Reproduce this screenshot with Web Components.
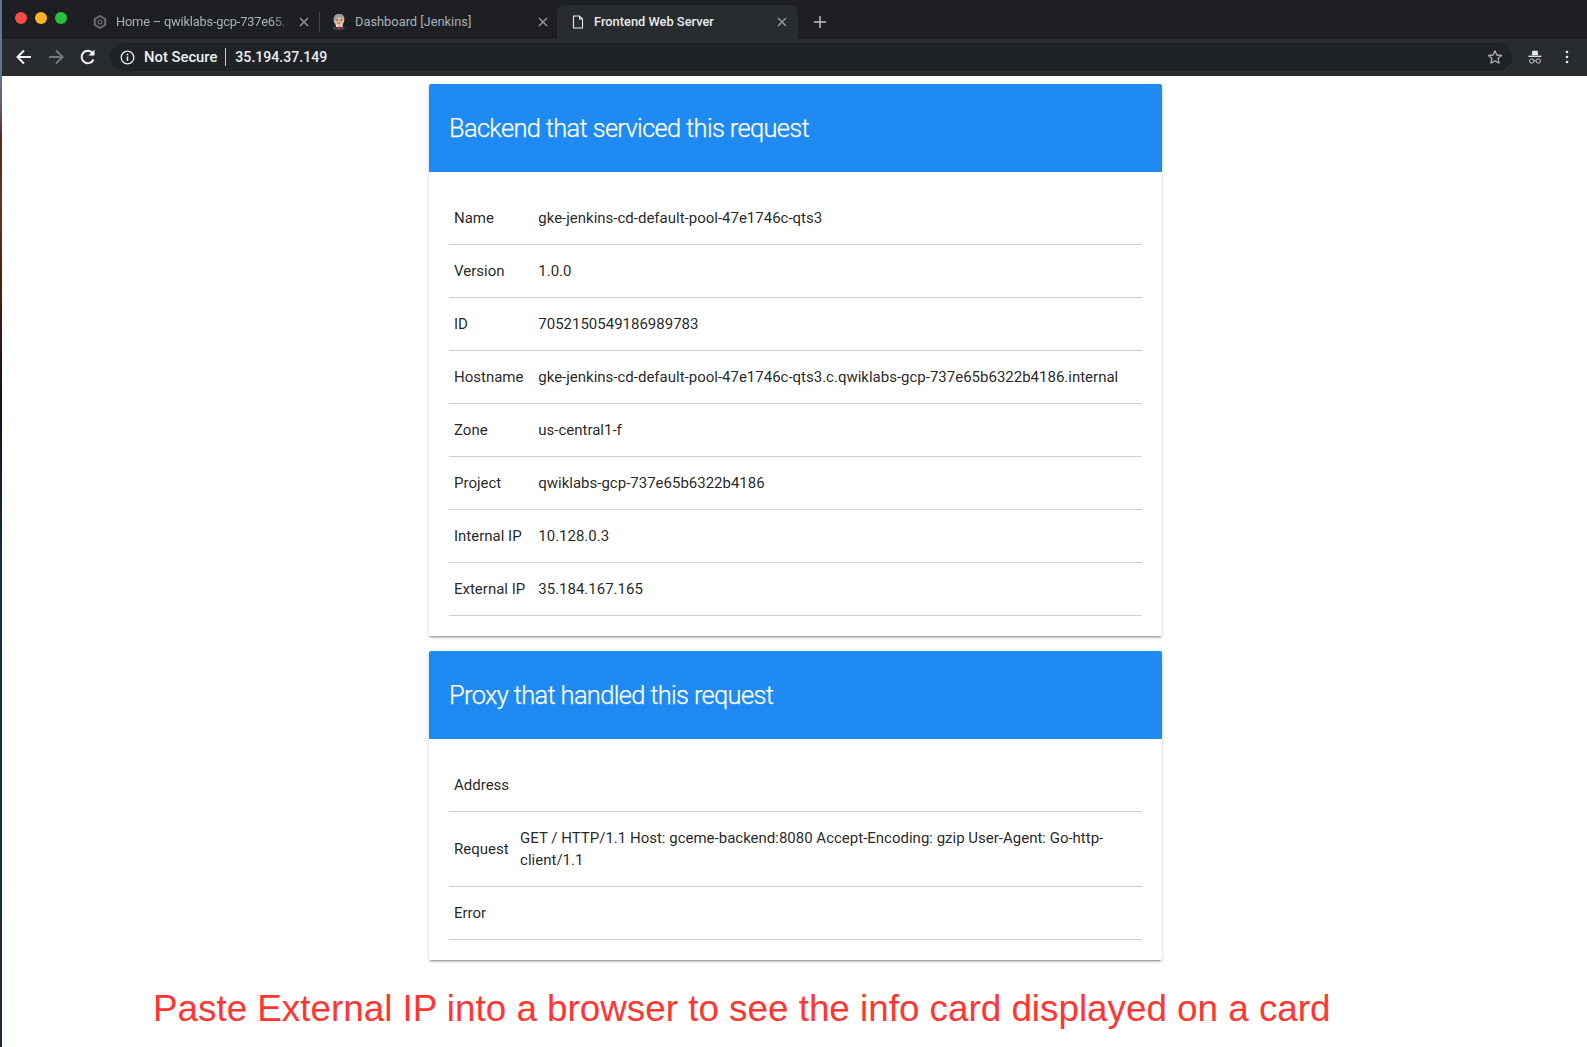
<!DOCTYPE html>
<html><head><meta charset="utf-8"><title>Frontend Web Server</title>
<style>
html,body{margin:0;background:#fff;height:100%}
body{width:1587px;height:1047px;overflow:hidden;display:flex;flex-direction:column;font-family:Roboto,sans-serif}
</style></head><body>
<browser-chrome></browser-chrome>
<page-area>
<info-card title="Backend that serviced this request">
<info-row label="Name">gke-jenkins-cd-default-pool-47e1746c-qts3</info-row>
<info-row label="Version">1.0.0</info-row>
<info-row label="ID">7052150549186989783</info-row>
<info-row label="Hostname">gke-jenkins-cd-default-pool-47e1746c-qts3.c.qwiklabs-gcp-737e65b6322b4186.internal</info-row>
<info-row label="Zone">us-central1-f</info-row>
<info-row label="Project">qwiklabs-gcp-737e65b6322b4186</info-row>
<info-row label="Internal IP">10.128.0.3</info-row>
<info-row label="External IP">35.184.167.165</info-row>
</info-card>
<info-card title="Proxy that handled this request" style="--label-pad:5px">
<info-row label="Address"></info-row>
<info-row label="Request">GET / HTTP/1.1 Host: gceme-backend:8080 Accept-Encoding: gzip User-Agent: Go-http-client/1.1</info-row>
<info-row label="Error"></info-row>
</info-card>
<red-caption>Paste External IP into a browser to see the info card displayed on a card</red-caption>
</page-area>
<script>
const def=(name,html,init)=>customElements.define(name,class extends HTMLElement{
  constructor(){super();this.attachShadow({mode:'open'}).innerHTML=html;}
  connectedCallback(){init&&init(this)}
});
const X='<svg class="x" width="10" height="10" viewBox="0 0 10 10"><path d="M1 1l8 8M9 1l-8 8" stroke="#9a9da1" stroke-width="1.3" fill="none"/></svg>';
def('browser-chrome',`<style>
:host{display:block;flex:none;font-family:Roboto,sans-serif;position:relative}
:host::after{content:"";position:absolute;left:0;top:0;bottom:0;width:2px;background:#64748c}
.strip{height:39px;background:#1d1f23;display:flex;align-items:flex-end;box-sizing:border-box}
.lights{display:flex;gap:8px;padding:12px 0 15px 15px;width:76px;align-self:flex-start}
.lights i{width:12px;height:12px;border-radius:50%;display:block}
.tab{height:34px;display:flex;align-items:center;font-size:12.85px;color:#a9b2bb;box-sizing:border-box;position:relative;white-space:nowrap}
.tab .t{flex:1;min-width:0;padding-bottom:2px}
.t1{width:228px;padding:0 10px 0 0}
.t1 svg.fav{margin:0 9px 0 2px}
.t1 .t{letter-spacing:-.2px;-webkit-mask-image:linear-gradient(90deg,#000 86%,rgba(0,0,0,.3) 93%);mask-image:linear-gradient(90deg,#000 86%,rgba(0,0,0,.3) 93%)}
.t2{width:238px;padding:0 9px 0 13px}
.t2::before{content:"";position:absolute;left:0;top:7px;height:20px;width:1px;background:#46494d}
.t2 svg.fav{margin:0 9px 0 0}
.t3{width:241px;padding:0 11px 0 15px;background:#292c2f;color:#e8eaed;border-radius:8px 8px 0 0;font-weight:500}
.t3 svg.fav{margin:0 10px 0 0}
.plus{margin:0 0 11px 16px}
.bar{height:37px;background:#292c2f;display:flex;align-items:center;box-sizing:border-box;padding:0 0 1px 14px}
.nav{display:flex;gap:12px;width:96px}
.nav svg{display:block}
.omni{width:1402px;height:28px;background:#202326;border-radius:14px;display:flex;align-items:center;box-sizing:border-box;padding:0 9px 0 10px;color:#eceef0;font-size:14.8px;font-weight:500;white-space:nowrap}
.omni .sep{width:1px;height:18px;background:#c8cacc;margin:0 9px 0 8px}
.omni .info{margin-right:9px}
.omni .url{font-size:14.1px}
.omni .sp{flex:1}
.r{display:flex;align-items:center;margin-left:15px}
.r .dots{margin-left:22px}
</style>
<div class="strip">
 <div class="lights"><i style="background:#fc4a47"></i><i style="background:#fdb427"></i><i style="background:#2ac13d"></i></div>
 <div class="tab t1"><svg class="fav" width="14" height="14" viewBox="0 0 14 14"><path d="M7 1l5.2 3v6L7 13l-5.200-3V4z" fill="none" stroke="#6a6c70" stroke-width="2"/><circle cx="7" cy="7" r="1.900" fill="none" stroke="#6a6c70" stroke-width="1.300"/></svg><span class="t">Home – qwiklabs-gcp-737e65.</span>${X}</div>
 <div class="tab t2"><svg class="fav" width="14" height="18" viewBox="0 0 14 18"><path d="M1 17c0-3.500 2-5 6-5s6 1.500 6 5z" fill="#2f3f55"/><ellipse cx="7" cy="7" rx="5.300" ry="6" fill="#dcb79a"/><path d="M1.800 9C.8 3.500 3.500 1 7 1s5.500 1.500 5.400 5c-2-2.200-6.400-2.500-8.400-.5C3.200 7 3 8 1.800 9z" fill="#9b9b98"/><path d="M4 10.500c1.500 2.500 5 2.500 6.500 0V14h-6.500z" fill="#f0e6dc"/><path d="M5.500 13.500h3.500l1 2-2.500 1-2.500-1z" fill="#b52a2e"/><circle cx="5.200" cy="7" r=".8" fill="#3a2a20"/><circle cx="9.300" cy="7" r=".8" fill="#3a2a20"/><path d="M5.500 10h3" stroke="#7a4a3a" stroke-width=".7"/></svg><span class="t">Dashboard [Jenkins]</span>${X}</div>
 <div class="tab t3"><svg class="fav" width="12" height="14" viewBox="0 0 12 14"><path d="M1.500 1h6l3 3v9h-9zM7.500 1v3h3" fill="none" stroke="#e8eaed" stroke-width="1.100"/></svg><span class="t">Frontend Web Server</span>${X}</div>
 <svg class="plus" width="12" height="12" viewBox="0 0 12 12"><path d="M6 0v12M0 6h12" stroke="#c4c7ca" stroke-width="1.400"/></svg>
</div>
<div class="bar">
 <div class="nav">
  <svg width="20" height="20" viewBox="0 0 20 20"><path d="M17 10H4M10 3.500L3.500 10l6.500 6.500" fill="none" stroke="#f1f3f4" stroke-width="2"/></svg>
  <svg width="20" height="20" viewBox="0 0 20 20"><path d="M3 10h13M10 3.500l6.500 6.500-6.500 6.500" fill="none" stroke="#75787b" stroke-width="2"/></svg>
  <svg width="20" height="20" viewBox="0 0 20 20"><path d="M15.500 12.500a6.200 6.200 0 1 1-.9-6.500" fill="none" stroke="#f1f3f4" stroke-width="2"/><path d="M16.500 2.500v6h-6z" fill="#f1f3f4"/></svg>
 </div>
 <div class="omni">
  <svg class="info" width="15" height="15" viewBox="0 0 15 15"><circle cx="7.500" cy="7.500" r="6.300" fill="none" stroke="#eceef0" stroke-width="1.300"/><path d="M7.500 6.500v4.500M7.500 3.800v1.500" stroke="#eceef0" stroke-width="1.500"/></svg>
  <span>Not Secure</span><span class="sep"></span><span class="url">35.194.37.149</span><span class="sp"></span>
  <svg width="16" height="16" viewBox="0 0 16 16"><path d="M8 1.800l1.900 4.200 4.600.5-3.400 3.100.9 4.500L8 11.800l-4 2.300.9-4.500L1.500 6.500 6.100 6z" fill="none" stroke="#a9abad" stroke-width="1.300" stroke-linejoin="round"/></svg>
 </div>
 <div class="r">
  <svg width="16" height="16" viewBox="0 0 16 16"><path d="M4.800 6.200L5.300 1.800h5.400l.5 4.400z" fill="#e8eaed"/><path d="M1.500 7.300h13" stroke="#e8eaed" stroke-width="1.300"/><circle cx="4.800" cy="12" r="2.200" fill="none" stroke="#d8dadc" stroke-width=".9"/><circle cx="11.200" cy="12" r="2.200" fill="none" stroke="#d8dadc" stroke-width=".9"/><path d="M7 11.700h2" stroke="#d8dadc" stroke-width=".8"/></svg>
  <svg class="dots" width="4" height="16" viewBox="0 0 4 16"><circle cx="2" cy="3" r="1.300" fill="#e8eaed"/><circle cx="2" cy="8" r="1.300" fill="#e8eaed"/><circle cx="2" cy="13" r="1.300" fill="#e8eaed"/></svg>
 </div>
</div>`);
def('page-area',`<style>
:host{display:flex;flex-direction:column;align-items:flex-start;flex:1;background:#fff;padding:8px 0 0 429px;box-sizing:border-box;gap:15px;position:relative}
:host::before{content:"";position:absolute;left:0;top:0;bottom:0;width:2px;background:linear-gradient(#64748c,#6b5570 34px,#5a2a22 61px,#6a2f1a 140px,#4a1c16 217px,#2a1414 284px,#10131f 330px,#1c2a40 480px,#1e2a3a)}
</style><slot></slot>`);
def('info-card',`<style>
:host{display:block;width:733px;background:#fff;border-radius:2px;box-shadow:0 2px 2px rgba(0,0,0,.14),0 3px 1px -2px rgba(0,0,0,.2),0 1px 5px rgba(0,0,0,.12);font-family:Roboto,sans-serif}
h2{margin:0;height:88px;box-sizing:border-box;background:#1f8af2;color:#fff;font-weight:300;font-size:25.44px;letter-spacing:-.66px;-webkit-text-stroke:.25px #fff;line-height:88px;padding-left:20px;border-radius:2px 2px 0 0}
.body{padding:20px}
.tbl{display:table;width:100%;border-collapse:collapse}
</style><h2></h2><div class="body"><div class="tbl"><slot></slot></div></div>`,el=>{el.shadowRoot.querySelector('h2').textContent=el.getAttribute('title');el.removeAttribute('title')});
def('info-row',`<style>
:host{display:table-row;font-size:15px;color:rgba(0,0,0,.87);line-height:22px}
.c{display:table-cell;padding:15px 6px 15px;border-bottom:1px solid #cfcfcf;vertical-align:middle}
.l{white-space:nowrap;width:1px;padding-left:5px;padding-right:var(--label-pad,7px)}
</style><div class="c l"></div><div class="c"><slot></slot></div>`,el=>{el.shadowRoot.querySelector('.l').textContent=el.getAttribute('label')});
def('red-caption',`<style>
:host{display:block;margin:12px 0 0 -276px;font:36.8px/1.2 "Liberation Sans",Arial,sans-serif;color:#ff3631;white-space:nowrap}
</style><slot></slot>`);
</script>
</body></html>
